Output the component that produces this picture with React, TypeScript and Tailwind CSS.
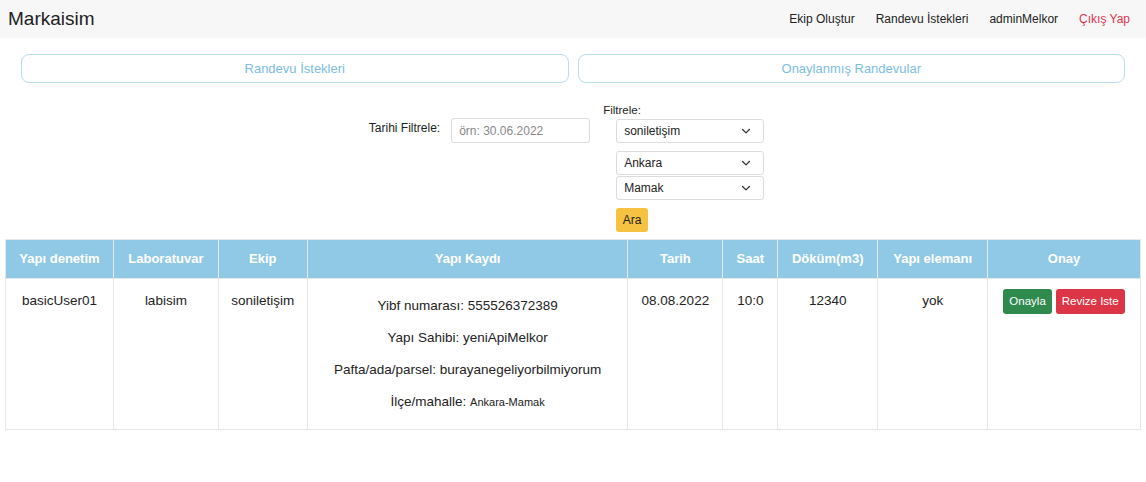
import React from 'react';

const Chevron: React.FC = () => (
  <svg width="10" height="10" viewBox="0 0 16 16" fill="none" stroke="#343a40" strokeWidth="2.2" strokeLinecap="round" strokeLinejoin="round">
    <path d="M2.5 5.5l5.5 5.5 5.5-5.5" />
  </svg>
);

const Select: React.FC<{ value: string; className?: string }> = ({ value, className = '' }) => (
  <div className={`w-[148px] h-[24px] border border-[#dcdcdc] rounded-[3px] bg-white flex items-center justify-between pl-[7px] pr-[12px] text-[12px] text-[#222] ${className}`}>
    <span>{value}</span>
    <Chevron />
  </div>
);

const headers = [
  { label: 'Yapı denetim', w: 'w-[108px]' },
  { label: 'Laboratuvar', w: 'w-[105px]' },
  { label: 'Ekip', w: 'w-[89px]' },
  { label: 'Yapı Kaydı', w: 'w-[321px]' },
  { label: 'Tarih', w: 'w-[95px]' },
  { label: 'Saat', w: 'w-[55px]' },
  { label: 'Döküm(m3)', w: 'w-[100px]' },
  { label: 'Yapı elemanı', w: 'w-[110px]' },
  { label: 'Onay', w: 'w-[153px]' },
];

export default function App() {
  return (
    <div className="min-h-[482px] bg-white font-['Liberation_Sans',Arial,sans-serif] text-[#222]">
      {/* Navbar */}
      <nav className="h-[38px] bg-[#f7f7f7] flex items-center justify-between pl-[8px] pr-[16px]">
        <span className="text-[19px] text-[#222]">Markaisim</span>
        <div className="flex items-center gap-[21px] text-[12px]">
          <span className="text-[#222]">Ekip Oluştur</span>
          <span className="text-[#222]">Randevu İstekleri</span>
          <span className="text-[#222]">adminMelkor</span>
          <span className="text-[#e0334d]">Çıkış Yap</span>
        </div>
      </nav>

      {/* Tab buttons */}
      <div className="flex gap-[9px] px-[21px] mt-[16px]">
        <button className="w-[548px] h-[29px] border border-[#b9dcef] rounded-[8px] text-[13px] text-[#7dbde3] bg-white">Randevu İstekleri</button>
        <button className="w-[548px] h-[29px] border border-[#b9dcef] rounded-[8px] text-[13px] text-[#7dbde3] bg-white">Onaylanmış Randevular</button>
      </div>

      {/* Filters */}
      <div className="flex justify-center mt-[21px]">
        <div className="flex items-start mr-[13px]">
          <span className="text-[12px] text-[#222] mt-[15px] mr-[11px]">Tarihi Filtrele:</span>
          <div className="w-[139px] h-[25px] border border-[#dcdcdc] rounded-[3px] flex items-center px-[7px] text-[12px] text-[#888] mt-[14px] mr-[13px]">örn: 30.06.2022</div>
          <div className="flex flex-col">
            <span className="text-[11.5px] text-[#222] leading-[13px]">Filtrele:</span>
            <div className="ml-[13px] mt-[2px] flex flex-col">
              <Select value="soniletişim" />
              <Select value="Ankara" className="mt-[8px]" />
              <Select value="Mamak" className="mt-[1px]" />
              <button className="mt-[8px] w-[32px] h-[24px] rounded-[3px] bg-[#f6c241] text-[12px] text-[#222]">Ara</button>
            </div>
          </div>
        </div>
      </div>

      {/* Table */}
      <table className="ml-[5px] mt-[7px] w-[1136px] border-collapse text-[13.5px]">
        <thead>
          <tr className="bg-[#90c9e6] h-[39px]">
            {headers.map(h => (
              <th key={h.label} className={`${h.w} border border-[#e2e8ec] text-white font-bold text-[13px] text-center`}>{h.label}</th>
            ))}
          </tr>
        </thead>
        <tbody>
          <tr className="h-[151px] align-top text-center text-[#222]">
            <td className="border border-[#e6e6e6] pt-[12px]">basicUser01</td>
            <td className="border border-[#e6e6e6] pt-[12px]">labisim</td>
            <td className="border border-[#e6e6e6] pt-[12px]">soniletişim</td>
            <td className="border border-[#e6e6e6] pt-[19px]">
              <p className="leading-[16px]">Yibf numarası: 555526372389</p>
              <p className="leading-[16px] mt-[16px]">Yapı Sahibi: yeniApiMelkor</p>
              <p className="leading-[16px] mt-[16px]">Pafta/ada/parsel: burayanegeliyorbilmiyorum</p>
              <p className="leading-[16px] mt-[16px]">İlçe/mahalle: <span className="text-[11px]">Ankara-Mamak</span></p>
            </td>
            <td className="border border-[#e6e6e6] pt-[12px]">08.08.2022</td>
            <td className="border border-[#e6e6e6] pt-[12px]">10:0</td>
            <td className="border border-[#e6e6e6] pt-[12px]">12340</td>
            <td className="border border-[#e6e6e6] pt-[12px]">yok</td>
            <td className="border border-[#e6e6e6] pt-[10px]">
              <div className="flex justify-center gap-[4px]">
                <button className="h-[25px] px-[6px] rounded-[3px] bg-[#2f8a4e] text-white text-[11.5px]">Onayla</button>
                <button className="h-[25px] px-[6px] rounded-[3px] bg-[#dc3545] text-white text-[11.5px]">Revize Iste</button>
              </div>
            </td>
          </tr>
        </tbody>
      </table>
    </div>
  );
}
